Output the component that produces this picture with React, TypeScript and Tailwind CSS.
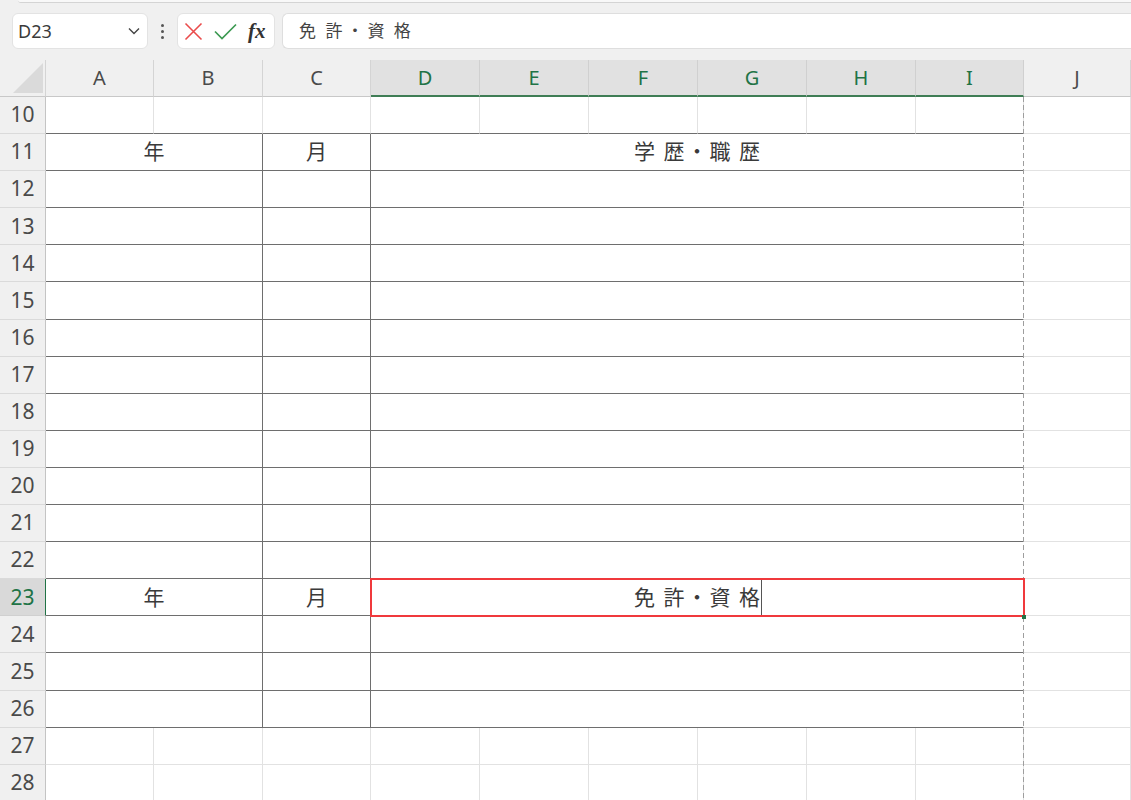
import React from "react";

const COLS = ["A", "B", "C", "D", "E", "F", "G", "H", "I", "J"];
const SELECTED = ["D", "E", "F", "G", "H", "I"];
const ROWS = Array.from({ length: 19 }, (_, i) => i + 10);

function FormulaBar() {
  return (
    <div className="h-[60px] bg-[#f0f0f0]">
      <div className="ml-[18px] h-[3px] rounded-bl-[6px] border-b border-[#d4d4d4] bg-[#f8f8f8]" />
      <div className="mt-[10px] flex h-[36px] pl-[12px]">
        <div className="flex w-[136px] items-center justify-between rounded-[6px] border border-[#e3e3e3] bg-white pl-[5px] pr-[7px] text-[18px] text-[#3a3a3a]">
          <span>D23</span>
          <svg width="12" height="8" viewBox="0 0 12 8">
            <path d="M1 1.5 L6 6.5 L11 1.5" fill="none" stroke="#444" strokeWidth="1.4" />
          </svg>
        </div>
        <div className="flex w-[29px] flex-col items-center justify-center gap-[3px]">
          <span className="h-[3px] w-[3px] rounded-full bg-[#555]" />
          <span className="h-[3px] w-[3px] rounded-full bg-[#555]" />
          <span className="h-[3px] w-[3px] rounded-full bg-[#555]" />
        </div>
        <div className="flex w-[98px] items-center rounded-[6px] border border-[#e3e3e3] bg-white pl-[6px]">
          <svg width="19" height="19" viewBox="0 0 19 19">
            <path d="M1.5 1.5 L17.5 17.5 M17.5 1.5 L1.5 17.5" stroke="#ea4b4b" strokeWidth="1.6" />
          </svg>
          <svg className="ml-[11px]" width="23" height="17" viewBox="0 0 23 17">
            <path d="M1 8.5 L8 15.5 L22 1.5" fill="none" stroke="#3d9a52" strokeWidth="1.7" />
          </svg>
          <span className="ml-[11px] font-['Liberation_Serif',serif] text-[21px] font-bold italic leading-none text-[#333]">
            fx
          </span>
        </div>
        <div className="ml-[7px] flex flex-1 items-center rounded-l-[6px] border border-r-0 border-[#dedede] bg-white pl-[16px] text-[17px] text-[#444] [word-spacing:5px]">
          免 許<span className="mx-[4px]">・</span>資 格
        </div>
      </div>
    </div>
  );
}

function HeaderRow() {
  return (
    <>
      <div className="relative border-b border-r border-b-[#c8c8c8] border-r-[#d4d4d4] bg-[#f0f0f0]">
        <svg className="absolute bottom-[3px] right-[2px]" width="30" height="30" viewBox="0 0 30 30">
          <polygon points="0,30 30,0 30,30" fill="#dadada" />
        </svg>
      </div>
      {COLS.map((c) =>
        SELECTED.includes(c) ? (
          <div
            key={c}
            className="flex items-center justify-center border-b-2 border-r border-b-[#3f7d55] border-r-[#d0d0d0] bg-[#e1e1e1] text-[20px] text-[#217346]"
          >
            {c}
          </div>
        ) : (
          <div
            key={c}
            className="flex items-center justify-center border-b border-r border-b-[#c8c8c8] border-r-[#d4d4d4] bg-[#f0f0f0] text-[20px] text-[#4a4a4a]"
          >
            {c}
          </div>
        )
      )}
    </>
  );
}

function RowHeader({ n }: { n: number }) {
  if (n === 23) {
    return (
      <div className="flex items-center justify-center border-b border-r border-b-[#d0d0d0] border-r-[#217346] bg-[#d9d9d9] text-[21px] text-[#217346]">
        {n}
      </div>
    );
  }
  return (
    <div className="flex items-center justify-center border-b border-r border-b-[#dadada] border-r-[#c4c4c4] bg-[#f0f0f0] text-[21px] text-[#4a4a4a]">
      {n}
    </div>
  );
}

function PlainRow({ n }: { n: number }) {
  return (
    <>
      <RowHeader n={n} />
      {COLS.map((c) =>
        n === 10 && c !== "J" ? (
          <div key={c} className="border-b border-r border-b-[#6e6e6e] border-r-[#e2e2e2]" />
        ) : (
          <div key={c} className="border-b border-r border-[#e2e2e2]" />
        )
      )}
    </>
  );
}

function TableRow({ n }: { n: number }) {
  const head = n === 11 || n === 23;
  return (
    <>
      <RowHeader n={n} />
      <div className="col-span-2 flex items-center justify-center border-b border-r border-[#6e6e6e] text-[21px] text-[#3a3a3a]">
        {head ? "年" : ""}
      </div>
      <div className="flex items-center justify-center border-b border-r border-[#6e6e6e] text-[21px] text-[#3a3a3a]">
        {head ? "月" : ""}
      </div>
      <div className="relative col-span-6 flex items-center justify-center border-b border-r border-b-[#6e6e6e] border-r-white text-[21px] text-[#3a3a3a] [word-spacing:3px]">
        {n === 11 && (
          <span>
            学 歴<span className="mx-[2px]">・</span>職 歴
          </span>
        )}
        {n === 23 && (
          <>
            <span className="relative flex h-full items-center">
              免 許<span className="mx-[2px]">・</span>資 格
              <span className="absolute left-[calc(100%+1px)] top-0 bottom-0 w-px bg-[#555]" />
            </span>
            <div className="absolute -left-px -top-px bottom-[-2px] right-[-2px] z-10 border-2 border-[#f0393c]" />
            <div className="absolute bottom-[-4px] right-[-3px] z-20 h-[4px] w-[4px] bg-[#217346]" />
          </>
        )}
      </div>
      <div className="border-b border-r border-[#e2e2e2]" />
    </>
  );
}

export default function App() {
  return (
    <div className="h-[800px] w-[1131px] overflow-hidden bg-white font-['Noto_Sans','Noto_Sans_CJK_JP',sans-serif]">
      <FormulaBar />
      <div className="relative grid grid-cols-[46px_108px_109px_108px_109px_109px_109px_109px_109px_108px_1fr] grid-rows-[37px] auto-rows-[37.1px]">
        <HeaderRow />
        {ROWS.map((n) =>
          n >= 11 && n <= 26 ? <TableRow key={n} n={n} /> : <PlainRow key={n} n={n} />
        )}
        <div className="absolute bottom-0 left-[1023px] top-[37px] w-px bg-[repeating-linear-gradient(to_bottom,#9e9e9e_0_5px,transparent_5px_8px)]" />
      </div>
    </div>
  );
}
